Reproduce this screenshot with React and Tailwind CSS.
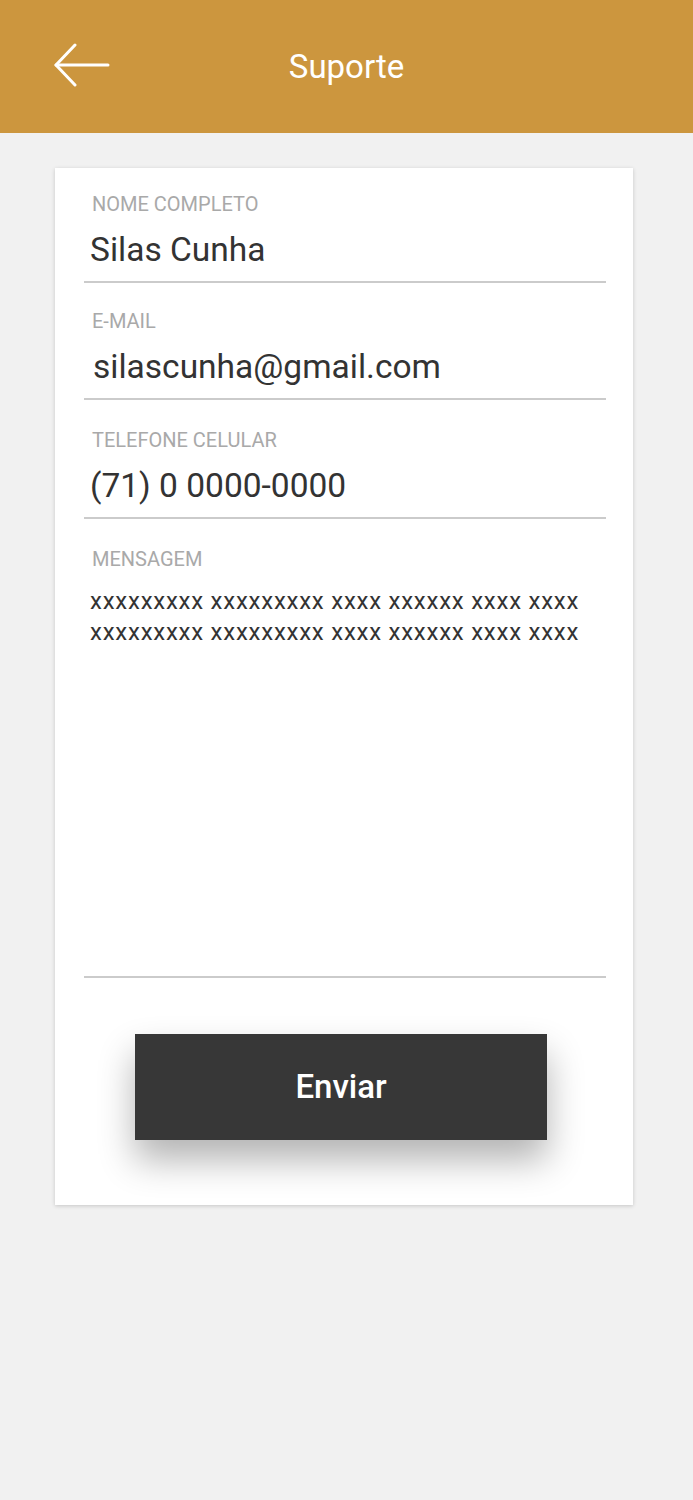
import React from 'react';

const fields = [
  { label: 'NOME COMPLETO', value: 'Silas Cunha', pad: 'pl-[6px]', gap: '' },
  { label: 'E-MAIL', value: 'silascunha@gmail.com', pad: 'pl-[9px]', gap: 'mt-[26px]' },
  { label: 'TELEFONE CELULAR', value: '(71) 0 0000-0000', pad: 'pl-[6px]', gap: 'mt-[28px]' },
];

const BackArrow = () => (
  <svg width="56" height="44" viewBox="0 0 56 44" fill="none" stroke="white" strokeWidth="3" strokeLinecap="round" strokeLinejoin="round">
    <path d="M21 2 L2 22 L21 42" />
    <path d="M2 22 H54" />
  </svg>
);

const App = () => {
  return (
    <div className="min-h-[1500px] bg-[#f1f1f1] font-['Roboto',sans-serif]">
      {/* Header */}
      <div className="relative flex h-[133px] items-center justify-center bg-[#cc963e]">
        <button className="absolute left-[54px] top-[43px]">
          <BackArrow />
        </button>
        <h1 className="text-[33px] font-normal leading-none text-white">Suporte</h1>
      </div>

      {/* Form card */}
      <div className="ml-[55px] mr-[60px] mt-[35px] bg-white pl-[29px] pr-[27px] pt-[24px] pb-[65px] shadow-[0_1px_4px_rgba(0,0,0,0.18)]">
        {fields.map((f) => (
          <div key={f.label} className={f.gap}>
            <div className="h-[24px] pl-[8px] text-[20px] leading-[24px] text-[#a9a9a9]">{f.label}</div>
            <div className={`mt-[14px] h-[40px] ${f.pad} text-[33.5px] leading-[40px] text-[#333333]`}>{f.value}</div>
            <div className="mt-[11px] h-[2px] bg-[#cbcbcb]" />
          </div>
        ))}

        <div className="mt-[28px]">
          <div className="h-[24px] pl-[8px] text-[20px] leading-[24px] text-[#a9a9a9]">MENSAGEM</div>
          <div className="mt-[15px] h-[390px] pl-[6px] text-[24px] leading-[31px] tracking-[0.75px] text-[#333333]">
            <p>xxxxxxxxx xxxxxxxxx xxxx xxxxxx xxxx xxxx</p>
            <p>xxxxxxxxx xxxxxxxxx xxxx xxxxxx xxxx xxxx</p>
          </div>
          <div className="h-[2px] bg-[#cbcbcb]" />
        </div>

        <div className="mr-[8px] mt-[56px] flex justify-center">
          <button className="flex h-[106px] w-[412px] items-center justify-center bg-[#373737] text-[33px] font-medium text-white shadow-[0_20px_36px_rgba(0,0,0,0.3)]">
            Enviar
          </button>
        </div>
      </div>
    </div>
  );
};

export default App;
